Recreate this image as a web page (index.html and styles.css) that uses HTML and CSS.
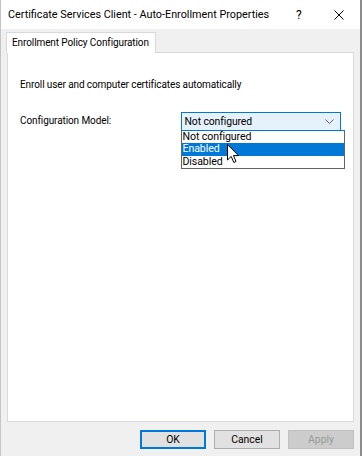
FILE: index.html
```html
<!doctype html>
<html lang="en">
  <head>
    <meta charset="UTF-8" />
    <title>Certificate Services Client - Auto-Enrollment Properties</title>
    <link rel="stylesheet" href="styles.css">
  </head>
  <body>
    <div class="window">
      <div class="titlebar">
        <span class="title">Certificate Services Client - Auto-Enrollment Properties</span>
        <span class="help">?</span>
        <svg class="close" width="10" height="10" viewBox="0 0 10 10">
          <path d="M0.5 0.5 L9.5 9.5 M9.5 0.5 L0.5 9.5" stroke="#000" stroke-width="1" fill="none" />
        </svg>
      </div>
      <div class="content">
        <div class="tabs">
          <div class="tab">Enrollment Policy Configuration</div>
        </div>
        <div class="panel">
          <p class="intro">Enroll user and computer certificates automatically</p>
          <div class="row">
            <span class="label">Configuration Model:</span>
            <div class="combo">
              <div class="combo-box">
                <span>Not configured</span>
                <svg width="9" height="5" viewBox="0 0 9 5">
                  <path d="M0.5 0.5 L4.5 4.5 L8.5 0.5" stroke="#606060" stroke-width="1" fill="none" />
                </svg>
              </div>
              <ul class="list">
                <li>Not configured</li>
                <li class="selected">Enabled</li>
                <li>Disabled</li>
              </ul>
              <svg class="cursor" width="13" height="20" viewBox="0 0 13 20">
                <path d="M0.5 0.5 L0.5 16 L4.2 12.4 L6.8 18.5 L9 17.5 L6.5 11.6 L11.5 11.6 Z" fill="#fff" stroke="#000" stroke-width="1" />
              </svg>
            </div>
          </div>
        </div>
        <div class="buttons">
          <button class="btn default">OK</button>
          <button class="btn">Cancel</button>
          <button class="btn disabled">Apply</button>
        </div>
      </div>
    </div>
  </body>
</html>
```

FILE: styles.css
```css
* {
  padding: 0;
  margin: 0;
  box-sizing: border-box;
}
body {
  background-color: #f0f0f0;
  font-family: Roboto, "Liberation Sans", sans-serif;
  color: #000;
}
.window {
  width: 362px;
  height: 456px;
  background-color: #f0f0f0;
  border-left: 1px solid #c4c4c4;
  border-right: 2px solid #8c8c8c;
  display: flex;
  flex-direction: column;
  white-space: nowrap;
}
.titlebar {
  height: 29px;
  background-color: #fff;
  display: flex;
  align-items: center;
  padding-left: 7px;
  font-size: 10.8px;
}
.title {
  flex: 1;
}
.help {
  width: 12px;
  margin-right: 26px;
  font-size: 12px;
}
.close {
  margin-right: 16px;
}
.content {
  padding: 3px 6px 0 5px;
  flex: 1;
  display: flex;
  flex-direction: column;
}
.tabs {
  display: flex;
}
.tab {
  height: 21px;
  padding: 0 6px 0 5px;
  background-color: #fff;
  border: 1px solid #d9d9d9;
  border-bottom: none;
  font-size: 10px;
  letter-spacing: -0.1px;
  line-height: 19px;
  margin-bottom: -1px;
  position: relative;
  z-index: 1;
}
.panel {
  height: 370px;
  margin-left: 1px;
  background-color: #fff;
  border: 1px solid #d9d9d9;
  padding: 25px 12px 0 12px;
  font-size: 10px;
  letter-spacing: -0.1px;
}
.intro {
  line-height: 14px;
}
.row {
  display: flex;
  align-items: flex-start;
  margin-top: 20px;
}
.label {
  width: 164px;
  line-height: 18px;
}
.combo {
  position: relative;
  width: 164px;
}
.combo-box {
  height: 19px;
  background-color: #e5f1fb;
  border: 1px solid #0078d7;
  display: flex;
  align-items: center;
  justify-content: space-between;
  padding: 0 6px 0 3px;
  font-size: 10.4px;
}
.list {
  position: absolute;
  left: 0;
  top: 18px;
  width: 164px;
  list-style: none;
  background-color: #fff;
  border: 1px solid #646464;
  border-top-color: #0078d7;
  font-size: 10.6px;
}
.list li {
  height: 12.3px;
  line-height: 12.3px;
  padding-left: 1px;
  overflow: hidden;
}
.list .selected {
  background-color: #0078d7;
  color: #fff;
}
.cursor {
  position: absolute;
  left: 46px;
  top: 32px;
}
.buttons {
  display: flex;
  justify-content: flex-end;
  gap: 8px;
  margin-top: 8px;
}
.btn {
  width: 66px;
  height: 19px;
  font-family: inherit;
  font-size: 10.4px;
  background-color: #e1e1e1;
  border: 1px solid #adadad;
  color: #000;
}
.btn.default {
  border: 2px solid #0078d7;
}
.btn.disabled {
  background-color: #cccccc;
  border-color: #bfbfbf;
  color: #9a9a9a;
}
```
